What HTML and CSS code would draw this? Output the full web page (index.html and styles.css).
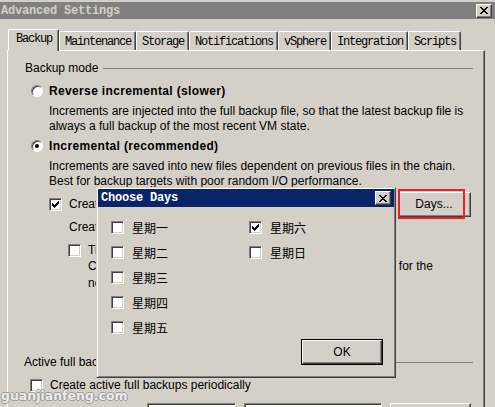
FILE: index.html
```html
<!DOCTYPE html>
<html>
<head>
<meta charset="utf-8">
<link rel="stylesheet" href="styles.css">
</head>
<body>
<div class="window">
  <div class="titlebar">
    <span class="title">Advanced Settings</span>
    <span class="cap-btn"><svg width="8" height="7" viewBox="0 0 8 7"><path d="M0 0h2v1h1v1h2V1h1V0h2v1H7v1H6v1H5v1h1v1h1v1h1v1H6V6H5V5H3v1H2v1H0V6h1V5h1V4h1V3H2V2H1V1H0z" fill="#000"/></svg></span>
  </div>
  <div class="tabs">
    <div class="tab sel">Backup</div>
    <div class="tab">Maintenance</div>
    <div class="tab">Storage</div>
    <div class="tab">Notifications</div>
    <div class="tab">vSphere</div>
    <div class="tab">Integration</div>
    <div class="tab">Scripts</div>
  </div>
  <div class="panel">
    <div class="group-head g1"><span>Backup mode</span><i class="rule"></i></div>
    <div class="opt r1"><span class="radio"></span><b>Reverse incremental (slower)</b></div>
    <div class="desc d1">Increments are injected into the full backup file, so that the latest backup file is<br>always a full backup of the most recent VM state.</div>
    <div class="opt r2"><span class="radio on"></span><b>Incremental (recommended)</b></div>
    <div class="desc d2">Increments are saved into new files dependent on previous files in the chain.<br>Best for backup targets with poor random I/O performance.</div>
    <div class="row synth"><span class="chk on"></span><span class="lbl">Create synthetic full</span><span class="btn days">Days...</span></div>
    <div class="row createon">Create on: Saturday</div>
    <div class="row transform"><span class="chk"></span><span class="lbl">Transform previous full backup chains</span></div>
    <div class="sub">Converts previous full chains into rollbacks, to save space for the<br>new full backup.</div>
    <div class="group-head g2"><span>Active full backup</span><i class="rule"></i></div>
    <div class="row active"><span class="chk"></span><span class="lbl">Create active full backups periodically</span></div>
    <div class="bottom">
      <span class="combo c1"></span>
      <span class="combo c2"></span>
      <span class="btn months"></span>
    </div>
  </div>
</div>

<div class="dialog">
  <div class="dtitle">
    <span class="title">Choose Days</span>
    <span class="cap-btn"><svg width="8" height="7" viewBox="0 0 8 7"><path d="M0 0h2v1h1v1h2V1h1V0h2v1H7v1H6v1H5v1h1v1h1v1h1v1H6V6H5V5H3v1H2v1H0V6h1V5h1V4h1V3H2V2H1V1H0z" fill="#000"/></svg></span>
  </div>
  <div class="dbody">
    <div class="daygrid">
      <div class="col">
        <div class="day"><span class="chk"></span><span>星期一</span></div>
        <div class="day"><span class="chk"></span><span>星期二</span></div>
        <div class="day"><span class="chk"></span><span>星期三</span></div>
        <div class="day"><span class="chk"></span><span>星期四</span></div>
        <div class="day"><span class="chk"></span><span>星期五</span></div>
      </div>
      <div class="col">
        <div class="day"><span class="chk on"></span><span>星期六</span></div>
        <div class="day"><span class="chk"></span><span>星期日</span></div>
      </div>
    </div>
    <div class="dfoot"><span class="btn ok">OK</span></div>
  </div>
</div>

<div class="highlight"></div>
<div class="watermark">guanjianfeng.com</div>
</body>
</html>
```
FILE: styles.css
```css
html, body {
  margin: 0;
  padding: 0;
}
body {
  width: 495px;
  height: 407px;
  overflow: hidden;
  position: relative;
  background: #d4d0c8;
  font-family: "Liberation Sans", Arial, sans-serif;
  font-size: 12px;
  color: #000;
}
.window {
  padding-top: 2px;
}
.titlebar {
  height: 17px;
  background: #808080;
  display: flex;
  align-items: center;
  padding-left: 1px;
}
.title {
  font-family: "Liberation Mono", monospace;
  font-weight: bold;
  font-size: 12px;
  letter-spacing: -0.2px;
  color: #d4d0c8;
}
.cap-btn {
  margin-left: auto;
  margin-right: 3px;
  width: 16px;
  height: 14px;
  box-sizing: border-box;
  background: #d4d0c8;
  border: 1px solid;
  border-color: #fff #404040 #404040 #fff;
  box-shadow: inset -1px -1px #808080;
  display: flex;
  align-items: center;
  justify-content: center;
  padding-right: 1px;
}
.tabs {
  display: flex;
  align-items: flex-end;
  padding-left: 8px;
  margin-top: 10px;
  height: 21px;
  position: relative;
  z-index: 1;
}
.tab {
  height: 19px;
  box-sizing: border-box;
  padding: 1px 4px 0 5px;
  border-top: 1px solid #fff;
  border-left: 1px solid #fff;
  border-right: 1px solid #404040;
  box-shadow: inset -1px 0 #808080;
  border-radius: 2px 2px 0 0;
  font-family: "Liberation Mono", monospace;
  font-size: 12px;
  letter-spacing: -1.2px;
  line-height: 18px;
  background: #d4d0c8;
}
.tab.sel {
  height: 22px;
  margin-bottom: -1px;
  padding: 0 6px 0 7px;
  line-height: 18px;
}
.panel {
  margin-left: 7px;
  width: 478px;
  height: 400px;
  box-sizing: border-box;
  border-top: 1px solid #fff;
  border-left: 1px solid #fff;
  border-right: 1px solid #404040;
  box-shadow: inset -1px 0 #808080;
  line-height: 15px;
}
.group-head {
  display: flex;
  align-items: center;
  height: 15px;
}
.group-head .rule {
  flex: 1;
  height: 0;
  border-top: 1px solid #808080;
  margin-left: 5px;
  margin-right: 11px;
  margin-top: -1px;
}
.g1 { margin-top: 10px; padding-left: 17px; }
.g2 { margin-top: 63px; padding-left: 16px; }
.opt {
  display: flex;
  align-items: center;
  height: 16px;
  padding-left: 23px;
}
.opt b { margin-left: 6px; letter-spacing: 0.35px; }
.r1 { margin-top: 7px; }
.r2 { margin-top: 4px; }
.desc { padding-left: 41px; white-space: nowrap; }
.d1 { margin-top: 5px; }
.d2 { margin-top: 5px; }
.radio {
  width: 12px;
  height: 12px;
  box-sizing: border-box;
  border-radius: 50%;
  background: #fff;
  border: 1px solid;
  border-color: #808080 #fff #fff #808080;
  box-shadow: inset 1px 1px #404040;
  position: relative;
}
.radio.on::after {
  content: "";
  position: absolute;
  left: 3px;
  top: 3px;
  width: 4px;
  height: 4px;
  border-radius: 50%;
  background: #000;
}
.chk {
  width: 13px;
  height: 13px;
  box-sizing: border-box;
  background: #fff;
  border: 1px solid;
  border-color: #808080 #fff #fff #808080;
  box-shadow: inset 1px 1px #404040, inset -1px -1px #d4d0c8;
  flex: none;
  position: relative;
}
.chk.on::after {
  content: "";
  position: absolute;
  left: 2px;
  top: 2px;
  width: 7px;
  height: 7px;
  background: url("data:image/svg+xml;utf8,<svg xmlns='http://www.w3.org/2000/svg' width='7' height='7' viewBox='0 0 7 7'><path d='M6 0h1v3H6v1H5v1H4v1H3v1H2V6H1V5H0V2h1v1h1v1h1V3h1V2h1V1h1z' fill='black'/></svg>") no-repeat;
}
.row {
  display: flex;
  align-items: center;
  white-space: nowrap;
}
.row .lbl { margin-left: 7px; }
.synth {
  margin-top: 3px;
  height: 25px;
  padding-left: 41px;
  padding-right: 13px;
}
.btn {
  box-sizing: border-box;
  background: #d4d0c8;
  border: 1px solid;
  border-color: #fff #404040 #404040 #fff;
  box-shadow: inset -1px -1px #808080;
  display: flex;
  align-items: center;
  justify-content: center;
}
.days {
  margin-left: auto;
  width: 73px;
  height: 25px;
  padding-right: 1px;
}
.createon {
  margin-top: 3px;
  height: 15px;
  padding-left: 61px;
}
.transform {
  margin-top: 8px;
  height: 15px;
  padding-left: 60px;
}
.sub {
  padding-left: 80px;
  line-height: 17px;
  white-space: nowrap;
}
.active {
  margin-top: 8px;
  height: 15px;
  padding-left: 22px;
}
.bottom {
  display: flex;
  margin-top: 10px;
  padding-left: 139px;
}
.combo {
  height: 22px;
  box-sizing: border-box;
  background: #fff;
  border: 1px solid;
  border-color: #808080 #fff #fff #808080;
  box-shadow: inset 1px 1px #404040;
  position: relative;
}
.combo::after {
  content: "";
  position: absolute;
  right: 2px;
  top: 2px;
  width: 14px;
  height: 16px;
  background: #d4d0c8;
  border-top: 1px solid #fff;
  border-left: 1px solid #fff;
}
.c1 { width: 89px; }
.c2 { width: 138px; margin-left: 8px; }
.months { width: 81px; height: 22px; margin-left: 8px; }

/* dialog overlay */
.dialog {
  position: absolute;
  left: 96px;
  top: 187px;
  width: 300px;
  height: 191px;
  box-sizing: border-box;
  background: #d4d0c8;
  border: 1px solid;
  border-color: #d4d0c8 #404040 #404040 #d4d0c8;
  box-shadow: inset 1px 1px #fff, inset -1px -1px #808080;
  padding: 1px;
  display: flex;
  flex-direction: column;
}
.dtitle {
  height: 18px;
  background: #0a246a;
  display: flex;
  align-items: center;
  padding-left: 3px;
  flex: none;
}
.dtitle .title { color: #fff; }
.dbody {
  flex: 1;
  display: flex;
  flex-direction: column;
}
.daygrid {
  display: flex;
  padding-top: 8px;
  padding-left: 13px;
}
.col { width: 138px; }
.day {
  height: 25px;
  display: flex;
  align-items: center;
  font-family: "Noto Sans CJK SC", sans-serif;
  font-size: 12px;
}
.day .chk { margin-right: 8px; }
.dfoot {
  margin-top: auto;
  display: flex;
  justify-content: flex-end;
  padding: 0 12px 12px 0;
}
.ok {
  width: 80px;
  height: 24px;
  outline: 1px solid #000;
}

.highlight {
  position: absolute;
  left: 398px;
  top: 189px;
  width: 67px;
  height: 30px;
  box-sizing: border-box;
  border: 2px solid #e8202c;
}
.watermark {
  position: absolute;
  left: 1px;
  top: 388px;
  font-family: "DejaVu Sans", sans-serif;
  font-weight: bold;
  font-size: 12.5px;
  letter-spacing: 0;
  color: #ececec;
  text-shadow: 1px 0 #9a9a9a, -1px 0 #9a9a9a, 0 1px #9a9a9a, 0 -1px #9a9a9a;
}
```
